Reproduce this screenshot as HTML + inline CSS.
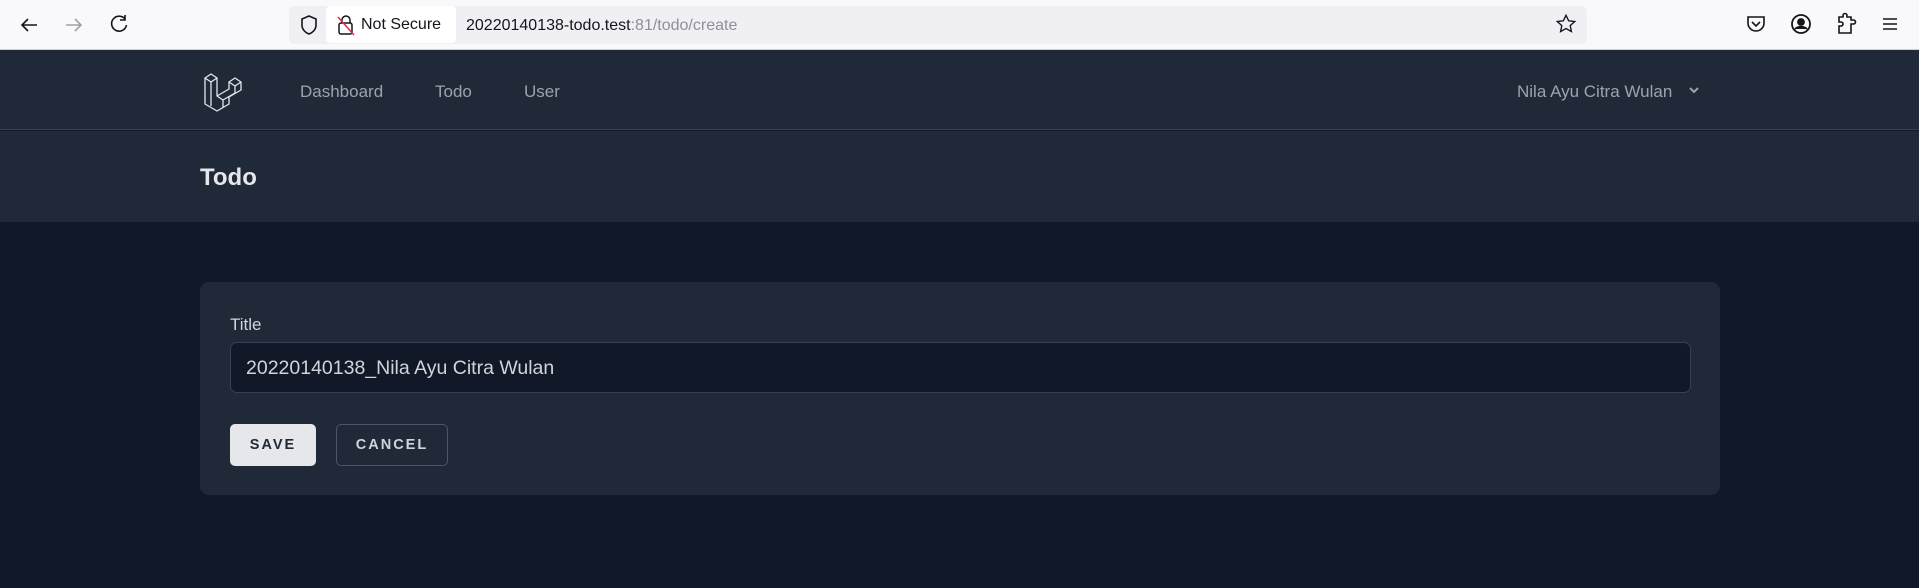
<!DOCTYPE html>
<html><head><meta charset="utf-8"><style>
*{box-sizing:border-box;margin:0;padding:0}
body{width:1919px;height:588px;overflow:hidden;background:#111827;font-family:"Liberation Sans",sans-serif;position:relative}
.chrome{position:absolute;left:0;top:0;width:1919px;height:50px;background:#f9f9fb;border-bottom:1px solid #d0d0d7}
.url{position:absolute;left:289px;top:6px;width:1298px;height:38px;background:#f0f0f4;border-radius:5px}
.pill{position:absolute;left:326px;top:6px;width:130px;height:37px;background:#fff;border-radius:4px;font-size:16px;color:#15141a;line-height:37px;padding-left:35px}
.ut{position:absolute;left:466px;top:7px;line-height:38px;font-size:16px;color:#15141a}
.ut span{color:#8f8f9d}
.nav{position:absolute;left:0;top:50px;width:1919px;height:80px;background:#1f2937;border-bottom:1px solid #374151}
.nl{position:absolute;top:50px;line-height:84px;font-size:17px;color:#9ca3af}
.hdr{position:absolute;left:0;top:131px;width:1919px;height:91px;background:#1f2937}
.hdr h2{position:absolute;left:200px;top:33px;font-size:24px;color:#e5e7eb;font-weight:bold}
.card{position:absolute;left:200px;top:282px;width:1520px;height:213px;background:#1f2937;border-radius:9px}
.lbl{position:absolute;left:230px;top:315px;font-size:17px;color:#d1d5db}
.inp{position:absolute;left:230px;top:342px;width:1461px;height:51px;background:#111827;border:1px solid #374151;border-radius:7px;font-size:19.5px;color:#d1d5db;padding-left:15px;line-height:51px}
.btn{position:absolute;top:424px;height:42px;border-radius:5px;font-size:14.5px;font-weight:bold;letter-spacing:2px;line-height:41px;text-align:center}
</style></head><body>
<div class="chrome">
<svg style="position:absolute;left:18px;top:14px" width="22" height="22" viewBox="0 0 22 22" fill="none" stroke="#15141a" stroke-width="1.6"><path d="M19 11H4M10 5l-6 6 6 6"/></svg>
<svg style="position:absolute;left:63px;top:14px" width="22" height="22" viewBox="0 0 22 22" fill="none" stroke="#a0a0a8" stroke-width="1.6"><path d="M3 11h15M12 5l6 6-6 6"/></svg>
<svg style="position:absolute;left:108px;top:13px" width="22" height="22" viewBox="0 0 22 22" fill="none" stroke="#15141a" stroke-width="1.6"><path d="M17 6A7.5 7.5 0 1 0 18.5 12M17 2v5h-5"/></svg>
<div class="url"></div>
<svg style="position:absolute;left:299px;top:14px" width="20" height="22" viewBox="0 0 20 22" fill="none" stroke="#15141a" stroke-width="1.6"><path d="M10 2L3 5v6c0 5 4 8 7 9 3-1 7-4 7-9V5z"/></svg>
<div class="pill">Not Secure</div>
<svg style="position:absolute;left:336px;top:14px" width="20" height="22" viewBox="0 0 20 22" fill="none" stroke="#15141a" stroke-width="1.5"><rect x="3" y="9" width="13" height="11" rx="2"/><path d="M6 9V6a4 4 0 0 1 8 0v3"/><path d="M2 3l16 18" stroke="#e22850"/></svg>
<div class="ut">20220140138-todo.test<span>:81/todo/create</span></div>
<svg style="position:absolute;left:1555px;top:13px" width="22" height="22" viewBox="0 0 24 24" fill="none" stroke="#15141a" stroke-width="1.5"><path d="M12 2.5l2.9 6 6.6.8-4.9 4.5 1.3 6.5L12 17l-5.9 3.3 1.3-6.5L2.5 9.3l6.6-.8z"/></svg>
<svg style="position:absolute;left:1745px;top:13px" width="22" height="22" viewBox="0 0 22 22" fill="none" stroke="#15141a" stroke-width="1.6"><path d="M3 4h16v6a8 8 0 0 1-16 0z"/><path d="M7 9l4 4 4-4"/></svg>
<svg style="position:absolute;left:1790px;top:13px" width="22" height="22" viewBox="0 0 22 22" fill="none" stroke="#15141a" stroke-width="1.8"><circle cx="11" cy="11" r="9"/><circle cx="11" cy="9" r="3" fill="#15141a"/><path d="M5 16c3-3 9-3 12 0" fill="#15141a"/></svg>
<svg style="position:absolute;left:1835px;top:12px" width="22" height="24" viewBox="0 0 22 24" fill="none" stroke="#15141a" stroke-width="1.6"><path d="M4 21h12V12h2.5a2 2 0 0 0 0-4H16V5h-4V3.5a2 2 0 0 0-4 0V5H4v5h2a2 2 0 0 1 0 4H4z"/></svg>
<svg style="position:absolute;left:1880px;top:14px" width="20" height="20" viewBox="0 0 20 20" stroke="#15141a" stroke-width="1.6"><path d="M3 5h14M3 10h14M3 15h14"/></svg>
</div>
<div class="nav"></div>
<svg style="position:absolute;left:203px;top:70px" width="42" height="42" viewBox="0 0 42 42" fill="none" stroke="#e5e7eb" stroke-width="1.3" stroke-linejoin="round"><path d="M2 8l6-4 6 4v18l12-7V12l6-4 6 4v8l-12 7v7l-12 7-12-7z M2 8l6 4 6-4 M8 12v24 M26 12l6 4 6-4 M32 16v7 M14 26l6 4 12-7 M20 30v7"/></svg>
<div class="nl" style="left:300px">Dashboard</div>
<div class="nl" style="left:435px">Todo</div>
<div class="nl" style="left:524px">User</div>
<div class="nl" style="left:1517px">Nila Ayu Citra Wulan</div>
<svg style="position:absolute;left:1688px;top:85px" width="12" height="10" viewBox="0 0 12 10" fill="none" stroke="#9ca3af" stroke-width="2"><path d="M2 3l4 4 4-4"/></svg>
<div class="hdr"><h2>Todo</h2></div>
<div class="card"></div>
<div class="lbl">Title</div>
<div class="inp">20220140138_Nila Ayu Citra Wulan</div>
<div class="btn" style="left:230px;width:86px;background:#e5e7eb;color:#1f2937;border:1px solid #e5e7eb">SAVE</div>
<div class="btn" style="left:336px;width:112px;border:1px solid #4b5563;color:#d1d5db;background:#1f2937">CANCEL</div>
</body></html>
